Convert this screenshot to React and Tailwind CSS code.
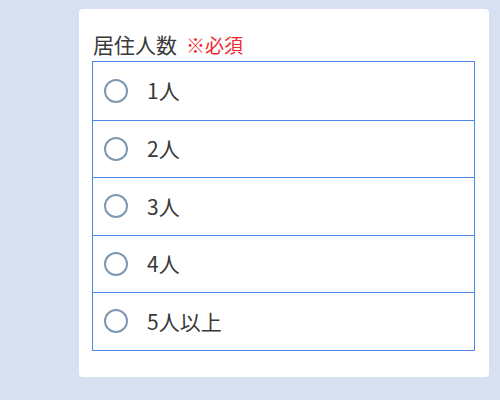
import React from "react";

const options = ["1人", "2人", "3人", "4人", "5人以上"];

export default function App() {
  return (
    <div
      className="w-[500px] h-[400px] bg-[#d7e0f0] pt-[9px] pl-[79px] overflow-hidden"
      style={{ fontFamily: '"Noto Sans CJK JP", "Noto Sans", sans-serif' }}
    >
      <div className="w-[410px] h-[368px] bg-white rounded-[4px] pl-[13px] pt-[18px]">
        <div className="flex items-baseline h-[34px] pl-px">
          <span className="text-[21px] leading-[34px] text-[#383838]">居住人数</span>
          <span className="text-[19px] leading-[34px] text-[#f0262e] ml-[9px]">※必須</span>
        </div>
        <div className="w-[383px] border-[1.5px] border-[#4f88e6] flex flex-col">
          {options.map((o, i) => (
            <label
              key={o}
              className={
                "flex items-center h-[57.5px] " +
                (i > 0 ? "border-t-[1.5px] border-[#4f88e6]" : "")
              }
            >
              <span className="ml-[11px] w-[24px] h-[24px] rounded-full border-2 border-[#7d98b3] bg-white shrink-0" />
              <span className="ml-[19px] text-[21px] text-[#383838] leading-none">{o}</span>
            </label>
          ))}
        </div>
      </div>
    </div>
  );
}
